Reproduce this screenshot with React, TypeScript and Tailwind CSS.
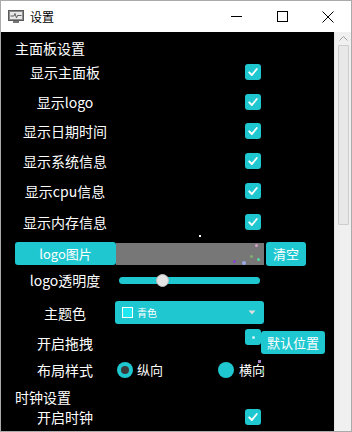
import React from "react";

const C = "bg-[#1fc8d0]";

function Check() {
  return (
    <div className={`w-[16px] h-[16px] rounded-[3px] ${C} flex items-center justify-center`}>
      <svg width="12" height="12" viewBox="0 0 12 12">
        <path d="M2.2 6.3 L4.9 9 L9.8 3" stroke="white" strokeWidth="1.9" fill="none" strokeLinecap="round" strokeLinejoin="round" />
      </svg>
    </div>
  );
}

function Row({ label, h = 30, children }: { label: string; h?: number; children?: React.ReactNode }) {
  return (
    <div className="flex items-center" style={{ height: h }}>
      <div className="w-[100px] text-center text-[14px] leading-[18px] text-white whitespace-nowrap">{label}</div>
      {children}
    </div>
  );
}

function CheckRow({ label, h = 30 }: { label: string; h?: number }) {
  return (
    <Row label={label} h={h}>
      <div className="ml-[130px]">
        <Check />
      </div>
    </Row>
  );
}

export default function App() {
  return (
    <div
      className="w-[352px] h-[432px] overflow-hidden bg-white border border-[#aaaaaa] flex flex-col"
      style={{ fontFamily: '"Noto Sans CJK SC", "Microsoft YaHei", sans-serif' }}
    >
      {/* title bar */}
      <div className="h-[31px] flex items-center shrink-0 bg-white">
        <svg width="16" height="14" viewBox="0 0 16 14" className="ml-[7px]">
          <rect x="0.5" y="0.5" width="15" height="10" fill="#8c8c8c" stroke="#5a5a5a" />
          <rect x="2" y="2" width="12" height="7" fill="#e8e8e8" />
          <path d="M2.5 6 H6 L7 3.5 L8.5 8 L9.5 5.5 H13.5" stroke="#606060" strokeWidth="1" fill="none" />
          <rect x="5" y="11" width="6" height="2" fill="#777" />
        </svg>
        <span className="ml-[6px] text-[12px] text-black">设置</span>
        <div className="ml-auto flex items-center">
          <div className="w-[46px] flex justify-center">
            <div className="w-[11px] h-[1px] bg-black" />
          </div>
          <div className="w-[46px] flex justify-center">
            <div className="w-[11px] h-[11px] border border-black" />
          </div>
          <div className="w-[46px] flex justify-center">
            <svg width="12" height="12" viewBox="0 0 12 12">
              <path d="M0.5 0.5 L11.5 11.5 M11.5 0.5 L0.5 11.5" stroke="black" strokeWidth="1" />
            </svg>
          </div>
        </div>
      </div>

      <div className="flex flex-1 min-h-0">
        {/* content */}
        <div className="flex-1 bg-black pl-[14px] relative overflow-hidden">
          <div className="h-[25px] flex items-end text-[14px] leading-[18px] text-white">主面板设置</div>
          <CheckRow label="显示主面板" />
          <CheckRow label="显示logo" h={29} />
          <CheckRow label="显示日期时间" />
          <CheckRow label="显示系统信息" />
          <CheckRow label="显示cpu信息" />
          <CheckRow label="显示内存信息" h={31} />

          {/* logo image row */}
          <div className="flex items-center mt-[5px] h-[23px] relative">
            <div className={`w-[101px] h-[23px] rounded-[3px] ${C} text-white text-[13px] flex items-center justify-center`}>
              logo图片
            </div>
            <div className="w-[148px] h-[22px] bg-[#777777] relative">
              <div className="absolute w-[3px] h-[3px] rounded-full bg-[#d6a0c8]" style={{ left: 139, top: 1 }} />
              <div className="absolute w-[3px] h-[3px] rounded-full bg-[#8a3fd1]" style={{ left: 117, top: 17 }} />
              <div className="absolute w-[4px] h-[4px] rounded-full bg-[#9aa8e8]" style={{ left: 126, top: 18 }} />
              <div className="absolute w-[3px] h-[3px] rounded-full bg-[#50e0a0]" style={{ left: 141, top: 15 }} />
              <div className="absolute w-[3px] h-[3px] rounded-full bg-[#80b070]" style={{ left: 134, top: 12 }} />
            </div>
            <div className={`ml-[2px] w-[40px] h-[24px] rounded-[3px] ${C} text-white text-[13px] flex items-center justify-center`}>
              清空
            </div>
            <div className="absolute w-[2px] h-[2px] bg-white" style={{ left: 184, top: -7 }} />
          </div>

          {/* opacity */}
          <Row label="logo透明度" h={30}>
            <div className="ml-[4px] w-[141px] h-[7px] rounded-full bg-[#1fc8d0] relative">
              <div className="absolute w-[13px] h-[13px] rounded-full bg-[#e4e4e4] border border-[#bbbbbb]" style={{ left: 37, top: -3 }} />
            </div>
          </Row>

          {/* theme color */}
          <Row label="主题色" h={35}>
            <div className={`w-[149px] h-[23px] rounded-[3px] ${C} flex items-center`}>
              <div className="ml-[7px] w-[11px] h-[11px] bg-[#20e8f0] border border-white" />
              <span className="ml-[4px] text-[10px] text-white">青色</span>
              <svg width="8" height="5" viewBox="0 0 8 5" className="ml-auto mr-[8px]">
                <path d="M0.5 0.5 L7.5 0.5 L4 4.5 Z" fill="#dddddd" />
              </svg>
            </div>
          </Row>

          {/* drag */}
          <Row label="开启拖拽" h={26}>
            <div className="ml-[130px] flex items-start">
              <div className={`w-[16px] h-[16px] rounded-[3px] ${C} flex items-center justify-center -mt-[3px]`}>
                <div className="w-[3px] h-[3px] rounded-full bg-[#c8f4f6]" />
              </div>
              <div className={`w-[64px] h-[23px] rounded-[3px] ${C} text-white text-[13px] flex items-center justify-center -mt-[1px]`}>
                默认位置
              </div>
            </div>
          </Row>

          {/* layout */}
          <Row label="布局样式" h={28}>
            <div className="flex items-center ml-[2px]">
              <div className="w-[16px] h-[16px] rounded-full bg-[#1fc8d0] flex items-center justify-center">
                <div className="w-[8px] h-[8px] rounded-full bg-[#3a3a3a]" />
              </div>
              <span className="ml-[4px] text-[13px] text-white">纵向</span>
              <div className="ml-[55px] w-[16px] h-[16px] rounded-full bg-[#1fc8d0]" />
              <span className="ml-[5px] text-[13px] text-white relative">
                横向
                <span className="absolute w-[3px] h-[3px] bg-[#a080c0]" style={{ left: 19, top: 0 }} />
                <span className="absolute w-[3px] h-[3px] bg-[#60a070]" style={{ left: 22, top: 10 }} />
              </span>
            </div>
          </Row>

          <div className="h-[22px] flex items-end text-[14px] leading-[18px] text-white">时钟设置</div>
          <CheckRow label="开启时钟" h={22} />
        </div>

        {/* scrollbar */}
        <div className="w-[17px] bg-[#f0f0f0] flex flex-col items-center border-l border-[#e6e6e6]">
          <div className="h-[13px] flex items-center justify-center">
            <svg width="9" height="5" viewBox="0 0 9 5">
              <path d="M0.5 4.5 L4.5 0.5 L8.5 4.5" stroke="#a0a0a0" strokeWidth="1" fill="none" />
            </svg>
          </div>
          <div className="w-[11px] h-[180px] bg-[#e8e8e8] border border-[#cdcdcd] rounded-[1px]" />
        </div>
      </div>
    </div>
  );
}
